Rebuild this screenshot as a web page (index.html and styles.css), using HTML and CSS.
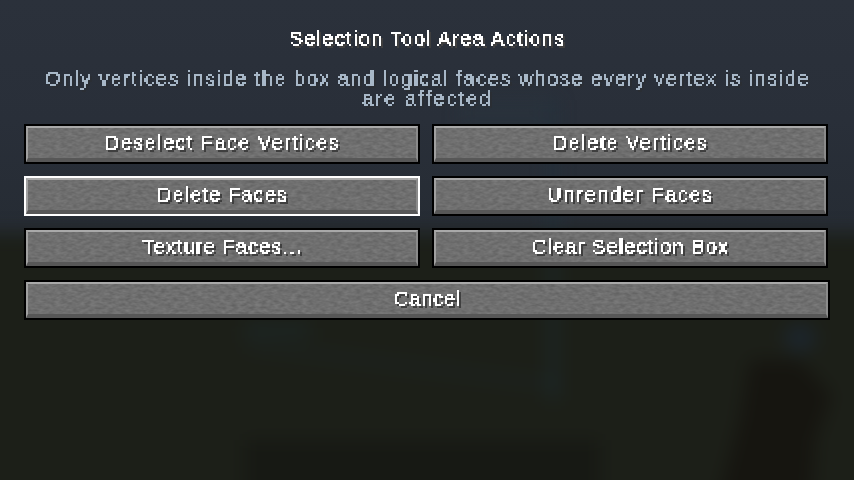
FILE: index.html
```html
<!DOCTYPE html>
<html lang="en">
<head>
<meta charset="utf-8">
<title>Selection Tool Area Actions</title>
<link rel="stylesheet" href="styles.css">
</head>
<body>
<svg class="defs" width="0" height="0" aria-hidden="true">
  <defs>
    <filter id="pixel" x="-4" y="-4" width="1000" height="60" filterUnits="userSpaceOnUse" primitiveUnits="userSpaceOnUse" color-interpolation-filters="sRGB">
      <feComponentTransfer in="SourceGraphic" result="hard"><feFuncA type="discrete" tableValues="0 1 1 1"/></feComponentTransfer>
      <feFlood x="0" y="0" width="1" height="1" flood-color="#000"/>
      <feComposite width="2" height="2"/>
      <feTile result="grid"/>
      <feComposite in="hard" in2="grid" operator="in" result="s"/>
      <feOffset in="s" dx="1" dy="0" result="s1"/>
      <feOffset in="s" dx="0" dy="1" result="s2"/>
      <feOffset in="s" dx="1" dy="1" result="s3"/>
      <feMerge result="glyph"><feMergeNode in="s"/><feMergeNode in="s1"/><feMergeNode in="s2"/><feMergeNode in="s3"/></feMerge>
      <feOffset in="glyph" dx="2" dy="2" result="off"/>
      <feFlood flood-color="#3f3f3f"/>
      <feComposite in2="off" operator="in" result="shadow"/>
      <feMerge><feMergeNode in="shadow"/><feMergeNode in="glyph"/></feMerge>
    </filter>
    <filter id="pixel-dim" x="-4" y="-4" width="1000" height="60" filterUnits="userSpaceOnUse" primitiveUnits="userSpaceOnUse" color-interpolation-filters="sRGB">
      <feComponentTransfer in="SourceGraphic" result="hard"><feFuncA type="discrete" tableValues="0 1 1 1"/></feComponentTransfer>
      <feFlood x="0" y="0" width="1" height="1" flood-color="#000"/>
      <feComposite width="2" height="2"/>
      <feTile result="grid"/>
      <feComposite in="hard" in2="grid" operator="in" result="s"/>
      <feOffset in="s" dx="1" dy="0" result="s1"/>
      <feOffset in="s" dx="0" dy="1" result="s2"/>
      <feOffset in="s" dx="1" dy="1" result="s3"/>
      <feMerge result="glyph"><feMergeNode in="s"/><feMergeNode in="s1"/><feMergeNode in="s2"/><feMergeNode in="s3"/></feMerge>
      <feOffset in="glyph" dx="2" dy="2" result="off"/>
      <feFlood flood-color="#2a2e34"/>
      <feComposite in2="off" operator="in" result="shadow"/>
      <feMerge><feMergeNode in="shadow"/><feMergeNode in="glyph"/></feMerge>
    </filter>
    <filter id="stone" x="0" y="0" width="100%" height="100%" color-interpolation-filters="sRGB">
      <feTurbulence type="fractalNoise" baseFrequency="0.17 0.36" numOctaves="2" seed="7"/>
      <feColorMatrix type="matrix" values="0.14 0 0 0 0.365  0.14 0 0 0 0.365  0.14 0 0 0 0.365  0 0 0 0 1"/>
    </filter>
  </defs>
</svg>

<svg class="scene" viewBox="0 0 854 480" aria-hidden="true">
  <g class="soft">
    <rect x="-40" y="233" width="940" height="300" fill="#1c1f18"/>
    <path d="M460 96 H550 V130 H460Z" fill="#2a3a48" opacity=".2"/>
    <path d="M553 100 V400" stroke="#1c3640" stroke-width="8" opacity=".45" fill="none"/>
    <path d="M245 345 L560 385" stroke="#1b3038" stroke-width="8" opacity=".3" fill="none"/>
    <path d="M245 330 H310" stroke="#1c3440" stroke-width="12" opacity=".35" fill="none"/>
    <ellipse cx="800" cy="338" rx="16" ry="14" fill="#1c2a3a" opacity=".6"/>
    <path d="M245 440 H600 V510 H245Z" fill="#161712" opacity=".7"/>
    <path d="M750 360 H800 L832 395 L815 440 L810 510 H715 L740 420Z" fill="#15130f" opacity=".8"/>
  </g>
</svg>

<main class="screen">
  <h1 class="title"><span class="txt t-title">Selection Tool Area Actions</span></h1>
  <p class="subtitle">
    <span class="line"><span class="txt dim t-sub1">Only vertices inside the box and logical faces whose every vertex is inside</span></span>
    <span class="line"><span class="txt dim t-sub2">are affected</span></span>
  </p>
  <div class="grid">
    <button class="btn"><span class="txt t-a">Deselect Face Vertices</span></button>
    <button class="btn"><span class="txt t-b">Delete Vertices</span></button>
    <button class="btn focus"><span class="txt t-c">Delete Faces</span></button>
    <button class="btn"><span class="txt t-d">Unrender Faces</span></button>
    <button class="btn"><span class="txt t-e">Texture Faces...</span></button>
    <button class="btn"><span class="txt t-f">Clear Selection Box</span></button>
    <button class="btn wide"><span class="txt t-g">Cancel</span></button>
  </div>
</main>
</body>
</html>
```
FILE: styles.css
```css
* { box-sizing: border-box; }
html, body { margin: 0; height: 100%; }
body {
  width: 854px;
  height: 480px;
  overflow: hidden;
  position: relative;
  background: linear-gradient(#2b313b 0, #292f39 120px, #262c34 225px);
  font-family: "Liberation Sans", Arial, sans-serif;
  color: #fff;
}
.defs { position: absolute; }
.scene { position: absolute; inset: 0; width: 854px; height: 480px; overflow: hidden; }
.soft { filter: blur(9px); }
.screen {
  position: relative;
  display: flex;
  flex-direction: column;
  align-items: center;
  padding-top: 28px;
}
.title, .subtitle { margin: 0; font-weight: normal; font-size: 20px; text-align: center; }
.title { height: 20px; line-height: 20px; }
.subtitle { margin-top: 20px; display: flex; flex-direction: column; height: 56px; }
.line { display: block; height: 20px; line-height: 20px; }
.txt {
  display: inline-block;
  white-space: pre;
  font-size: 20px;
  line-height: 20px;
  color: #fff;
  filter: url(#pixel);
}
.dim { color: #a8b8c8; filter: url(#pixel-dim); }
.grid {
  display: grid;
  grid-template-columns: 396px 396px;
  column-gap: 12px;
  row-gap: 12px;
  width: 804px;
  align-self: flex-start;
  margin-left: 24px;
}
.btn {
  position: relative;
  height: 40px;
  padding: 0 0 4px;
  border: 2px solid #000;
  background: #6f6f6f;
  display: flex;
  align-items: center;
  justify-content: center;
  font: inherit;
  overflow: hidden;
}
.btn::before {
  content: "";
  position: absolute;
  inset: 0;
  filter: url(#stone);
}
.btn::after {
  content: "";
  position: absolute;
  inset: 0;
  border-top: 2px solid #a9a9a9;
  border-left: 2px solid #a0a0a0;
  border-right: 2px solid #8a8a8a;
  border-bottom: 4px solid #575757;
}
.btn .txt { position: relative; z-index: 1; }
.focus { border-color: #fff; }
.wide { grid-column: 1 / -1; width: 806px; }
.t-title { letter-spacing: 1.3px; }
.t-sub1 { letter-spacing: 1.47px; }
.t-sub2 { letter-spacing: 2.1px; }
.t-a { letter-spacing: 1.4px; }
.t-b { letter-spacing: 1.4px; }
.t-c { letter-spacing: 1.1px; }
.t-d { letter-spacing: 1.65px; }
.t-e { letter-spacing: 1.1px; }
.t-f { letter-spacing: 1.15px; }
.t-g { letter-spacing: 0.8px; }
```
